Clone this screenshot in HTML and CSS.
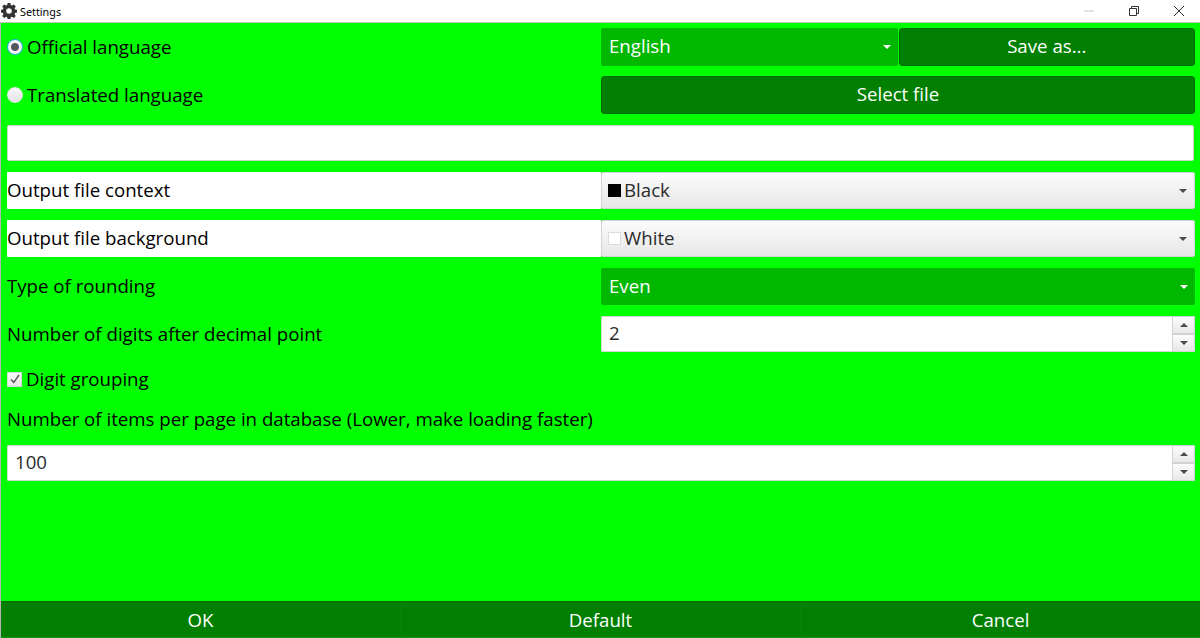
FILE: index.html
```html
<!DOCTYPE html>
<html lang="en">
<head>
<meta charset="utf-8">
<title>Settings</title>
<link rel="stylesheet" href="styles.css">
</head>
<body>
<div class="window">
  <header class="titlebar">
    <svg class="app-icon" viewBox="0 0 16 16" width="16" height="16"><path fill="#333" fill-rule="evenodd" d="M6.600 0h2.800l.4 2.100 1.200.5L12.800 1.400l2 2-1.200 1.800.5 1.200 1.900.4v2.800l-1.900.4-.5 1.200 1.200 1.800-2 2-1.800-1.200-1.200.5-.4 2H6.600l-.4-2-1.200-.5-1.800 1.200-2-2 1.200-1.800-.5-1.200-1.900-.4V6.800l1.900-.4.5-1.200L1.200 3.400l2-2L5 2.600l1.200-.5zM8 5.200a2.800 2.800 0 1 0 0 5.600 2.800 2.800 0 0 0 0-5.600z"/></svg>
    <span class="title">Settings</span>
    <div class="caption-buttons">
      <svg class="cap" viewBox="0 0 10 10" width="10" height="10"><path d="M0 5h10" stroke="#c4c4c4" fill="none"/></svg>
      <svg class="cap" viewBox="0 0 10 10" width="10" height="10"><path d="M.5 2.500h7v7h-7zM2.500 2.500v-2h7v7h-2" stroke="#333" fill="none"/></svg>
      <svg class="cap" viewBox="0 0 10 10" width="10" height="10"><path d="M0 0l10 10M10 0L0 10" stroke="#333" fill="none"/></svg>
    </div>
  </header>
  <main class="content">
    <div class="row">
      <label class="col option"><span class="radio checked"></span>Official language</label>
      <div class="col pair">
        <div class="select dark-green"><span>English</span><span class="arrow white"></span></div>
        <button class="btn">Save as...</button>
      </div>
    </div>
    <div class="row">
      <label class="col option"><span class="radio"></span>Translated language</label>
      <div class="col"><button class="btn wide">Select file</button></div>
    </div>
    <div class="row input-row"><div class="textbox"></div></div>
    <div class="row tall">
      <div class="col plain">Output file context</div>
      <div class="select light"><span class="swatch black"></span><span>Black</span><span class="arrow"></span></div>
    </div>
    <div class="row tall">
      <div class="col plain">Output file background</div>
      <div class="select light"><span class="swatch white"></span><span>White</span><span class="arrow"></span></div>
    </div>
    <div class="row tall">
      <div class="col label">Type of rounding</div>
      <div class="select mid-green"><span>Even</span><span class="arrow white"></span></div>
    </div>
    <div class="row num-row">
      <div class="col label">Number of digits after decimal point</div>
      <div class="spin">
        <div class="spin-value">2</div>
        <div class="spin-btns"><span class="sb"><i class="arrow up"></i></span><span class="sb"><i class="arrow"></i></span></div>
      </div>
    </div>
    <label class="check-row"><span class="check"><svg viewBox="0 0 12 12" width="12" height="12"><path d="M2 6.500l2.800 3L10 2" stroke="#555" stroke-width="1.400" fill="none"/></svg></span>Digit grouping</label>
    <div class="text-row">Number of items per page in database (Lower, make loading faster)</div>
    <div class="row num-row">
      <div class="spin">
        <div class="spin-value">100</div>
        <div class="spin-btns"><span class="sb"><i class="arrow up"></i></span><span class="sb"><i class="arrow"></i></span></div>
      </div>
    </div>
  </main>
  <footer class="footer">
    <button class="foot-btn">OK</button>
    <button class="foot-btn">Default</button>
    <button class="foot-btn">Cancel</button>
  </footer>
</div>
</body>
</html>
```
FILE: styles.css
```css
* { box-sizing: border-box; }
html, body { margin: 0; height: 100%; }
body {
  font-family: "Open Sans", "Noto Sans", sans-serif;
  font-size: 18.670px;
  color: #000;
  overflow: hidden;
}
.window {
  height: 638px;
  display: flex;
  flex-direction: column;
  background: #00ff00;
  border-left: 1px solid #b5b5b5;
}
.titlebar {
  height: 23px;
  flex: none;
  display: flex;
  align-items: center;
  background: #fff;
  border-bottom: 1px solid #b8c4b8;
  margin-left: -1px;
  padding-left: 1px;
  font-size: 10.800px;
}
.app-icon { margin-right: 3px; flex: none; }
.title { font-family: "Noto Sans", sans-serif; }
.caption-buttons {
  margin-left: auto;
  display: flex;
  gap: 35px;
  padding-right: 16px;
}
.content {
  flex: 1;
  display: flex;
  flex-direction: column;
  padding: 5px 5px 0 6px;
  gap: 10px;
}
.row { height: 38px; display: flex; flex: none; }
.col { width: 594px; flex: none; display: flex; align-items: center; }
.col:last-child { width: auto; flex: 1; }
.option { gap: 4px; padding-bottom: 2px; }
.pair { display: grid; grid-template-columns: 1fr 1fr; gap: 1px; padding-bottom: 0; }
.radio {
  width: 16px; height: 16px; border-radius: 50%;
  margin-top: 2px;
  background: linear-gradient(#f8f8f8, #e2e2e2);
  border: 1px solid #e4e4e4;
  flex: none;
}
.radio.checked {
  background: radial-gradient(circle, #55555f 0 3.500px, #f0f4f8 4.500px);
  border: 1.500px solid #2ba8ee;
}
.select {
  height: 38px;
  flex: 1;
  display: flex;
  align-items: center;
  padding: 0 8px 3px;
  border-radius: 2px;
}
.select .arrow { margin-left: auto; margin-right: -1px; margin-top: 3px; }
.dark-green { background: #00b800; color: #fff; }
.mid-green { background: #00b800; color: #fff; height: 37px; }
.light {
  height: 37px;
  padding-left: 6px;
  background: linear-gradient(#fcfcfc, #e6e6e6);
  border: 1px solid #d4d4d4;
  color: #2b2b2b;
  border-radius: 2px;
}
.arrow {
  display: block;
  width: 0; height: 0;
  border-left: 4px solid transparent;
  border-right: 4px solid transparent;
  border-top: 4px solid #4a4a4a;
}
.arrow.white { border-top-color: #fff; }
.arrow.up { border-top: 0; border-bottom: 4px solid #4a4a4a; }
.btn {
  height: 38px;
  background: #007f00;
  border: 1px solid #006f00;
  border-radius: 3px;
  color: #fff;
  font: inherit;
  padding: 0 0 3px;
}
.wide { width: 100%; }
.input-row { align-items: center; }
.textbox {
  width: 100%;
  height: 36px;
  margin-right: 1px;
  background: #fff;
  border: 1px solid #c8d8c8;
  border-radius: 2px;
}
.tall { align-items: flex-start; }
.plain {
  height: 37px;
  background: #fff;
  padding-bottom: 3px;
}
.label { height: 36px; padding-bottom: 2px; }
.spin { flex: 1; height: 36px; display: flex; }
.spin-value {
  flex: 1;
  background: #fff;
  color: #2b2b2b;
  display: flex;
  align-items: center;
  padding: 0 0 3px 7px;
  border: 1px solid #cfdccf;
  border-right: 0;
  border-radius: 2px 0 0 2px;
}
.spin-btns { width: 23px; display: flex; flex-direction: column; }
.sb {
  flex: 1;
  display: flex;
  align-items: center;
  justify-content: center;
  background: linear-gradient(#fcfcfc, #e8e8e8);
  border: 1px solid #d2d2d2;
}
.swatch {
  width: 13px; height: 13px; flex: none; margin: 3px 3px 0 0;
}
.swatch.black { background: #000; }
.swatch.white { background: #fff; border: 1px solid #dcdcdc; }
.check-row {
  height: 30px;
  flex: none;
  display: flex;
  align-items: center;
  gap: 4px;
  padding-bottom: 2px;
}
.check {
  width: 15px; height: 15px; flex: none;
  margin-top: 2px;
  background: linear-gradient(#f8f8f8, #e6e6e6);
  border: 1px solid #d8d8d8;
  display: flex; align-items: center; justify-content: center;
}
.text-row { height: 31px; flex: none; display: flex; align-items: center; padding-bottom: 3px; }
.footer {
  height: 37px;
  flex: none;
  display: flex;
  background: #007f00;
  border-top: 1px solid #006f00;
  border-bottom: 1px solid #1f931f;
}
.foot-btn {
  flex: 1;
  background: transparent;
  border: 0;
  color: #fff;
  font: inherit;
  padding: 0 0 1px;
}
.foot-btn + .foot-btn { border-left: 1px solid #048304; }
```
